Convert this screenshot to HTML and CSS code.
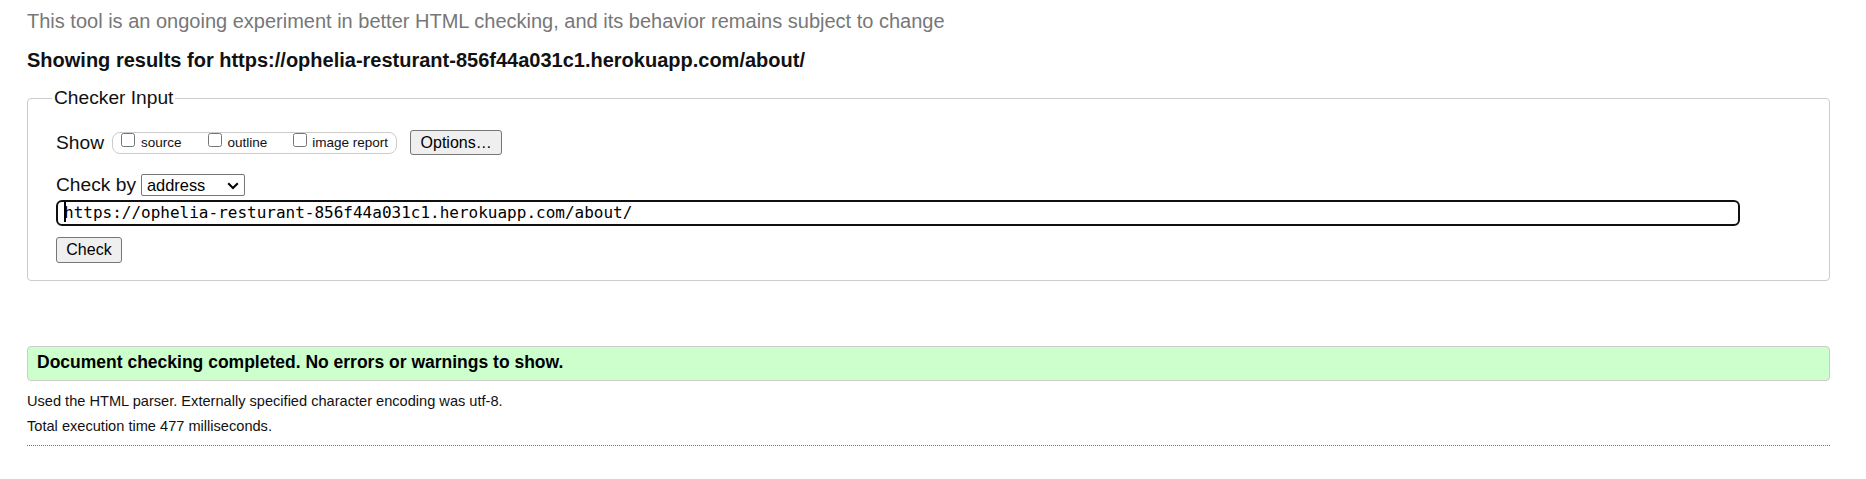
FILE: index.html
```html
<!DOCTYPE html>
<html lang="en">
<head>
<meta charset="utf-8">
<title>Nu Html Checker</title>
<link rel="stylesheet" href="styles.css">
</head>
<body>
<p class="subtitle">This tool is an ongoing experiment in better HTML checking, and its behavior remains subject to change</p>
<p class="results-for">Showing results for https://ophelia-resturant-856f44a031c1.herokuapp.com/about/</p>
<form class="checker-form">
  <fieldset class="checker">
    <legend class="checker-legend">Checker Input</legend>
    <div class="row row-show">
      <span class="row-label">Show</span>
      <div class="show-options">
        <label class="opt"><input class="cb" type="checkbox"><span class="opt-text">source</span></label>
        <label class="opt"><input class="cb" type="checkbox"><span class="opt-text">outline</span></label>
        <label class="opt opt-last"><input class="cb" type="checkbox"><span class="opt-text">image report</span></label>
      </div>
      <button type="button" class="btn btn-options">Options…</button>
    </div>
    <div class="row row-checkby">
      <span class="row-label">Check by</span>
      <div class="fake-select">
        <span class="select-value">address</span>
        <svg class="chevron" width="12" height="8" viewBox="0 0 12 8"><polyline points="1.2,1.2 6,6 10.8,1.2" fill="none" stroke="#000" stroke-width="2"/></svg>
      </div>
    </div>
    <div class="row row-url">
      <div class="url-field"><span class="caret"></span>https://ophelia-resturant-856f44a031c1.herokuapp.com/about/</div>
    </div>
    <div class="row row-submit">
      <button type="button" class="btn btn-check">Check</button>
    </div>
  </fieldset>
</form>
<div class="success">
  <p class="success-text">Document checking completed. No errors or warnings to show.</p>
</div>
<p class="details details-first">Used the HTML parser. Externally specified character encoding was utf-8.</p>
<p class="details">Total execution time 477 milliseconds.</p>
<div class="dotted-rule"></div>
</body>
</html>
```

FILE: styles.css
```css
html, body {
  background: #fff;
}
body {
  margin: 0;
  padding: 10px 36px 0 27px;
  font-family: "Liberation Sans", Arial, sans-serif;
  font-size: 19.2px;
  color: #000;
}
.subtitle {
  margin: 0;
  line-height: 22px;
  color: #777;
  font-size: 20px;
}
.results-for {
  margin: 16px 0 0;
  font-size: 20px;
  line-height: 24px;
  font-weight: bold;
  color: #111;
}
.checker-form {
  margin: 15px 0 0;
}
.checker {
  margin: 0;
  border: 1px solid #ccc;
  border-radius: 4px;
  padding: 21px 28px 17px 28px;
  min-width: 0;
}
.checker-legend {
  font-size: 19.2px;
  line-height: 22px;
  padding: 0 2px;
  margin-left: -4px;
  color: #111;
}
.row {
  display: flex;
  align-items: center;
}
.row-label {
  font-size: 19.2px;
  line-height: 22px;
  color: #111;
}
.row-show {
  height: 25px;
}
.show-options {
  display: flex;
  align-items: flex-start;
  box-sizing: border-box;
  height: 22px;
  margin-left: 8px;
  padding: 0 8px 0 8px;
  border: 1px solid #ccc;
  border-radius: 8px;
}
.opt {
  display: flex;
  align-items: flex-start;
  margin-right: 26px;
}
.opt-last {
  margin-right: 0;
}
.cb {
  width: 14px;
  height: 14px;
  margin: 0 6px 0 0;
  accent-color: #000;
}
.opt-last .cb {
  margin-right: 5px;
}
.opt-text {
  font-size: 13.5px;
  line-height: 16px;
  padding-top: 2px;
  color: #111;
}
.btn {
  font-family: "Liberation Sans", Arial, sans-serif;
  font-size: 16px;
  color: #000;
  background: #efefef;
  border: 1px solid #767676;
  border-radius: 3px;
  padding: 0 9px;
  box-sizing: border-box;
}
.btn-options {
  height: 25px;
  width: 92px;
  margin-left: 13px;
}
.row-checkby {
  margin-top: 19px;
  height: 22px;
}
.fake-select {
  display: flex;
  align-items: center;
  justify-content: space-between;
  box-sizing: border-box;
  width: 104px;
  height: 22px;
  margin-left: 5px;
  padding: 0 5px 0 5px;
  border: 1px solid #767676;
  border-radius: 2px;
  background: #fff;
}
.select-value {
  font-size: 16.4px;
  line-height: 20px;
  color: #000;
}
.chevron {
  display: block;
  margin-top: 1px;
}
.row-url {
  margin-top: 4px;
}
.url-field {
  box-sizing: border-box;
  width: 1684px;
  height: 26px;
  border: 2px solid #101010;
  border-radius: 6px;
  padding: 0 6px;
  font-family: "DejaVu Sans Mono", "Liberation Mono", monospace;
  font-size: 16px;
  line-height: 22px;
  color: #000;
  white-space: nowrap;
  overflow: hidden;
}
.caret {
  display: inline-block;
  width: 2px;
  height: 20px;
  background: #000;
  margin-right: -2px;
  vertical-align: -4px;
}
.row-submit {
  margin-top: 11px;
}
.btn-check {
  height: 26px;
  width: 66px;
}
.success {
  margin-top: 65px;
  box-sizing: border-box;
  height: 35px;
  background: #ccffcc;
  border: 1px solid #ccc;
  border-radius: 4px;
  padding: 5px 9px 0;
}
.success-text {
  margin: 0;
  font-size: 17.5px;
  line-height: 20px;
  font-weight: bold;
  color: #000;
}
.details {
  margin: 0;
  font-size: 14.6px;
  line-height: 25px;
  color: #111;
}
.details-first {
  margin-top: 8px;
}
.dotted-rule {
  margin-top: 6px;
  border-top: 1px dotted #777;
  height: 0;
}
```
